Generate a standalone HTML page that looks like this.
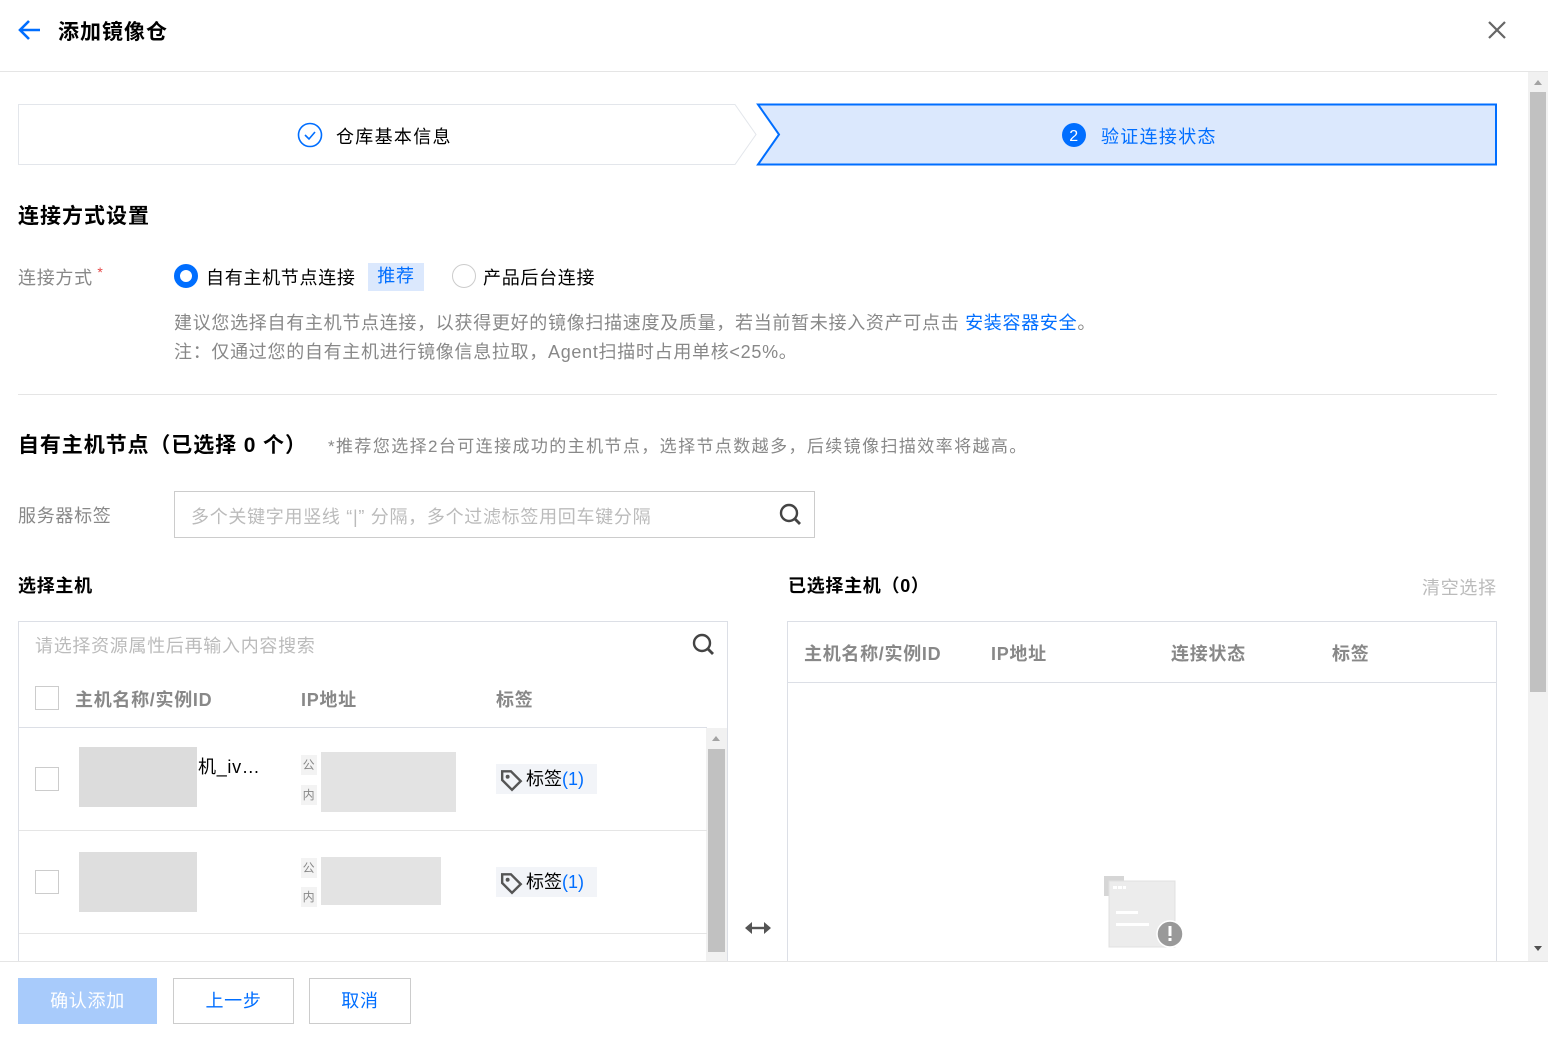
<!DOCTYPE html>
<html><head><meta charset="utf-8"><style>
*{margin:0;padding:0;box-sizing:border-box}
body{width:1548px;height:1037px;overflow:hidden;background:#fff;font-family:"Liberation Sans","Noto Sans CJK SC",sans-serif;color:#000;position:relative;letter-spacing:0.7px}
.a{position:absolute;white-space:nowrap}
.g{color:#888}
.cb{position:absolute;width:17px;height:17px;border:1px solid #ccc;background:#fff}
.pix{position:absolute;background:#e4e4e4}
.tag{position:absolute;background:#f2f4f8;height:30px;width:101px;font-size:18px;line-height:30px;padding-left:30px;letter-spacing:0}
.tag svg{position:absolute;left:4px;top:4px}
.btn{position:absolute;top:978px;height:46px;border:1px solid #ccc;font-size:18px;line-height:44px;text-align:center;color:#006eff}
.sm{position:absolute;font-size:12px;color:#888;background:#f3f3f3;width:16px;height:20px;text-align:center;line-height:20px}
</style></head><body>
<!-- header -->
<svg class="a" style="left:18px;top:19px" width="24" height="22" viewBox="0 0 24 22"><path d="M22 11H3M11 2L2 11l9 9" stroke="#006eff" stroke-width="2.6" fill="none"/></svg>
<div class="a" style="left:58px;top:16px;font-size:21px;font-weight:bold;letter-spacing:1px">添加镜像仓</div>
<svg class="a" style="left:1487px;top:20px" width="20" height="20"><path d="M2 2L18 18M18 2L2 18" stroke="#666" stroke-width="2.2"/></svg>
<div class="a" style="left:0;top:71px;width:1548px;height:1px;background:#e5e5e5"></div>
<!-- scrollbar -->
<div class="a" style="left:1528px;top:72px;width:20px;height:889px;background:#f1f1f1"></div>
<div class="a" style="left:1530px;top:92px;width:16px;height:600px;background:#c1c1c1"></div>
<div class="a" style="left:1534px;top:80px;border:4px solid transparent;border-bottom:5px solid #a3a3a3;border-top:0"></div>
<div class="a" style="left:1534px;top:946px;border:4px solid transparent;border-top:5px solid #505050;border-bottom:0"></div>
<!-- steps -->
<svg class="a" style="left:18px;top:103px" width="1480" height="64">
<path d="M0.5 1.5H717L738 31.5L717 61.5H0.5Z" fill="#fff" stroke="#e3e6eb"/>
<path d="M740 1.5H1478V61.5H740L761 31.5Z" fill="#dbe8fd" stroke="#006eff" stroke-width="2"/>
<circle cx="292" cy="32" r="11.5" fill="none" stroke="#006eff" stroke-width="1.6"/>
<path d="M287 32l4 4 6-7" fill="none" stroke="#006eff" stroke-width="1.6"/>
<circle cx="1056" cy="32" r="12" fill="#006eff"/>
<text x="1056" y="38" font-size="16" fill="#fff" text-anchor="middle" font-family="Liberation Sans">2</text>
</svg>
<div class="a" style="left:336px;top:123px;font-size:18px;letter-spacing:1.3px">仓库基本信息</div>
<div class="a" style="left:1101px;top:123px;font-size:18px;color:#006eff;letter-spacing:1.3px">验证连接状态</div>
<!-- section 1 -->
<div class="a" style="left:18px;top:200px;font-size:21px;font-weight:bold;letter-spacing:1px">连接方式设置</div>
<div class="a g" style="left:18px;top:264px;font-size:18px">连接方式<span style="color:#e54545;font-size:14px;vertical-align:top"> *</span></div>
<div class="a" style="left:174px;top:264px;width:24px;height:24px;border-radius:50%;border:6px solid #006eff"></div>
<div class="a" style="left:206px;top:264px;font-size:18px">自有主机节点连接</div>
<div class="a" style="left:368px;top:263px;width:56px;height:28px;background:#dbe8fd;color:#006eff;font-size:18px;text-align:center;line-height:27px">推荐</div>
<div class="a" style="left:452px;top:264px;width:24px;height:24px;border-radius:50%;border:1px solid #ccc"></div>
<div class="a" style="left:483px;top:264px;font-size:18px">产品后台连接</div>
<div class="a g" style="left:174px;top:309px;font-size:18px">建议您选择自有主机节点连接，以获得更好的镜像扫描速度及质量，若当前暂未接入资产可点击 <span style="color:#006eff">安装容器安全</span>。</div>
<div class="a g" style="left:174px;top:338px;font-size:18px">注：仅通过您的自有主机进行镜像信息拉取，Agent扫描时占用单核&lt;25%。</div>
<div class="a" style="left:18px;top:394px;width:1479px;height:1px;background:#e5e5e5"></div>
<!-- section 2 -->
<div class="a" style="left:18px;top:429px;font-size:21px;font-weight:bold;letter-spacing:0.9px">自有主机节点（已选择 0 个）</div>
<div class="a g" style="left:328px;top:432px;font-size:17px;letter-spacing:1.4px">*推荐您选择2台可连接成功的主机节点，选择节点数越多，后续镜像扫描效率将越高。</div>
<div class="a g" style="left:18px;top:502px;font-size:18px">服务器标签</div>
<div class="a" style="left:174px;top:491px;width:641px;height:47px;border:1px solid #ccc"></div>
<div class="a" style="left:191px;top:503px;font-size:18px;color:#bbb">多个关键字用竖线 “|” 分隔，多个过滤标签用回车键分隔</div>
<svg class="a" style="left:779px;top:503px" width="24" height="24"><circle cx="10" cy="10" r="8" fill="none" stroke="#444" stroke-width="2.4"/><path d="M16 16l5 5" stroke="#444" stroke-width="2.8"/></svg>
<!-- left table -->
<div class="a" style="left:18px;top:572px;font-size:18px;font-weight:bold">选择主机</div>
<div class="a" style="left:18px;top:621px;width:710px;height:345px;border:1px solid #dcdfe6;border-bottom:0"></div>
<div class="a" style="left:35px;top:632px;font-size:18px;color:#bbb">请选择资源属性后再输入内容搜索</div>
<svg class="a" style="left:692px;top:633px" width="24" height="24"><circle cx="10" cy="10" r="8" fill="none" stroke="#444" stroke-width="2.4"/><path d="M16 16l5 5" stroke="#444" stroke-width="2.8"/></svg>
<div class="cb" style="left:35px;top:686px;width:24px;height:24px"></div>
<div class="a" style="left:75px;top:686px;font-size:18px;font-weight:bold;color:#888">主机名称/实例ID</div>
<div class="a" style="left:301px;top:686px;font-size:18px;font-weight:bold;color:#888">IP地址</div>
<div class="a" style="left:496px;top:686px;font-size:18px;font-weight:bold;color:#888">标签</div>
<div class="a" style="left:19px;top:727px;width:688px;height:1px;background:#dcdfe6"></div>
<div class="a" style="left:706px;top:728px;width:21px;height:233px;background:#f1f1f1"></div>
<div class="a" style="left:708px;top:749px;width:17px;height:203px;background:#c1c1c1"></div>
<div class="a" style="left:712px;top:736px;border:4px solid transparent;border-bottom:5px solid #a3a3a3;border-top:0"></div>
<!-- row1 -->
<div class="cb" style="left:35px;top:767px;width:24px;height:24px"></div>
<div class="pix" style="left:79px;top:747px;width:118px;height:60px;background:#dcdcdc"></div>
<div class="a" style="left:198px;top:753px;font-size:18px">机_iv…</div>
<div class="sm" style="left:301px;top:755px">公</div><div class="sm" style="left:301px;top:785px">内</div>
<div class="pix" style="left:321px;top:752px;width:135px;height:60px;background:#e3e3e3"></div>
<div class="tag" style="left:496px;top:764px"><svg width="24" height="24" viewBox="0 0 22 22"><path d="M2 3v8l9 9 8-8-9-9H2z" fill="none" stroke="#555" stroke-width="2.2"/><circle cx="7" cy="8" r="1.8" fill="#555"/></svg>标签<span style="color:#006eff">(1)</span></div>
<div class="a" style="left:19px;top:830px;width:688px;height:1px;background:#e5e5e5"></div>
<!-- row2 -->
<div class="cb" style="left:35px;top:870px;width:24px;height:24px"></div>
<div class="pix" style="left:79px;top:852px;width:118px;height:60px;background:#dedede"></div>
<div class="sm" style="left:301px;top:858px">公</div><div class="sm" style="left:301px;top:887px">内</div>
<div class="pix" style="left:321px;top:857px;width:120px;height:48px;background:#e3e3e3"></div>
<div class="tag" style="left:496px;top:867px"><svg width="24" height="24" viewBox="0 0 22 22"><path d="M2 3v8l9 9 8-8-9-9H2z" fill="none" stroke="#555" stroke-width="2.2"/><circle cx="7" cy="8" r="1.8" fill="#555"/></svg>标签<span style="color:#006eff">(1)</span></div>
<div class="a" style="left:19px;top:933px;width:688px;height:1px;background:#e5e5e5"></div>
<svg class="a" style="left:745px;top:920px" width="26" height="16"><path d="M5 8H21" stroke="#555" stroke-width="2.4"/><path d="M0 8l7-6v12zM26 8l-7-6v12z" fill="#555"/></svg>
<!-- right table -->
<div class="a" style="left:788px;top:572px;font-size:18px;font-weight:bold">已选择主机（0）</div>
<div class="a" style="left:1422px;top:574px;font-size:18px;color:#bbb">清空选择</div>
<div class="a" style="left:787px;top:621px;width:710px;height:345px;border:1px solid #dcdfe6;border-bottom:0"></div>
<div class="a" style="left:788px;top:682px;width:708px;height:1px;background:#dcdfe6"></div>
<div class="a" style="left:804px;top:640px;font-size:18px;font-weight:bold;color:#888">主机名称/实例ID</div>
<div class="a" style="left:991px;top:640px;font-size:18px;font-weight:bold;color:#888">IP地址</div>
<div class="a" style="left:1171px;top:640px;font-size:18px;font-weight:bold;color:#888">连接状态</div>
<div class="a" style="left:1332px;top:640px;font-size:18px;font-weight:bold;color:#888">标签</div>
<svg class="a" style="left:1103px;top:875px" width="82" height="74"><rect x="1" y="1" width="20" height="20" fill="#d6d6d6"/><rect x="6" y="6" width="66" height="66" fill="#ececec" stroke="#e0e0e0"/><rect x="10" y="11" width="4" height="3" fill="#fff"/><rect x="15" y="11" width="4" height="3" fill="#fff"/><rect x="20" y="11" width="3" height="3" fill="#fff"/><rect x="13" y="36" width="22" height="3" fill="#fff"/><rect x="13" y="48" width="33" height="3" fill="#fff"/><circle cx="67" cy="59" r="13" fill="#999" stroke="#fff" stroke-width="1.5"/><rect x="65.5" y="51" width="3" height="10" fill="#fff"/><rect x="65.5" y="63" width="3" height="3" fill="#fff"/></svg>
<!-- footer -->
<div class="a" style="left:0;top:961px;width:1548px;height:76px;background:#fff;border-top:1px solid #e5e5e5"></div>
<div class="btn" style="left:18px;width:139px;background:#a8cbfb;border-color:#a8cbfb;color:#fff">确认添加</div>
<div class="btn" style="left:173px;width:121px">上一步</div>
<div class="btn" style="left:309px;width:102px">取消</div>
</body></html>
